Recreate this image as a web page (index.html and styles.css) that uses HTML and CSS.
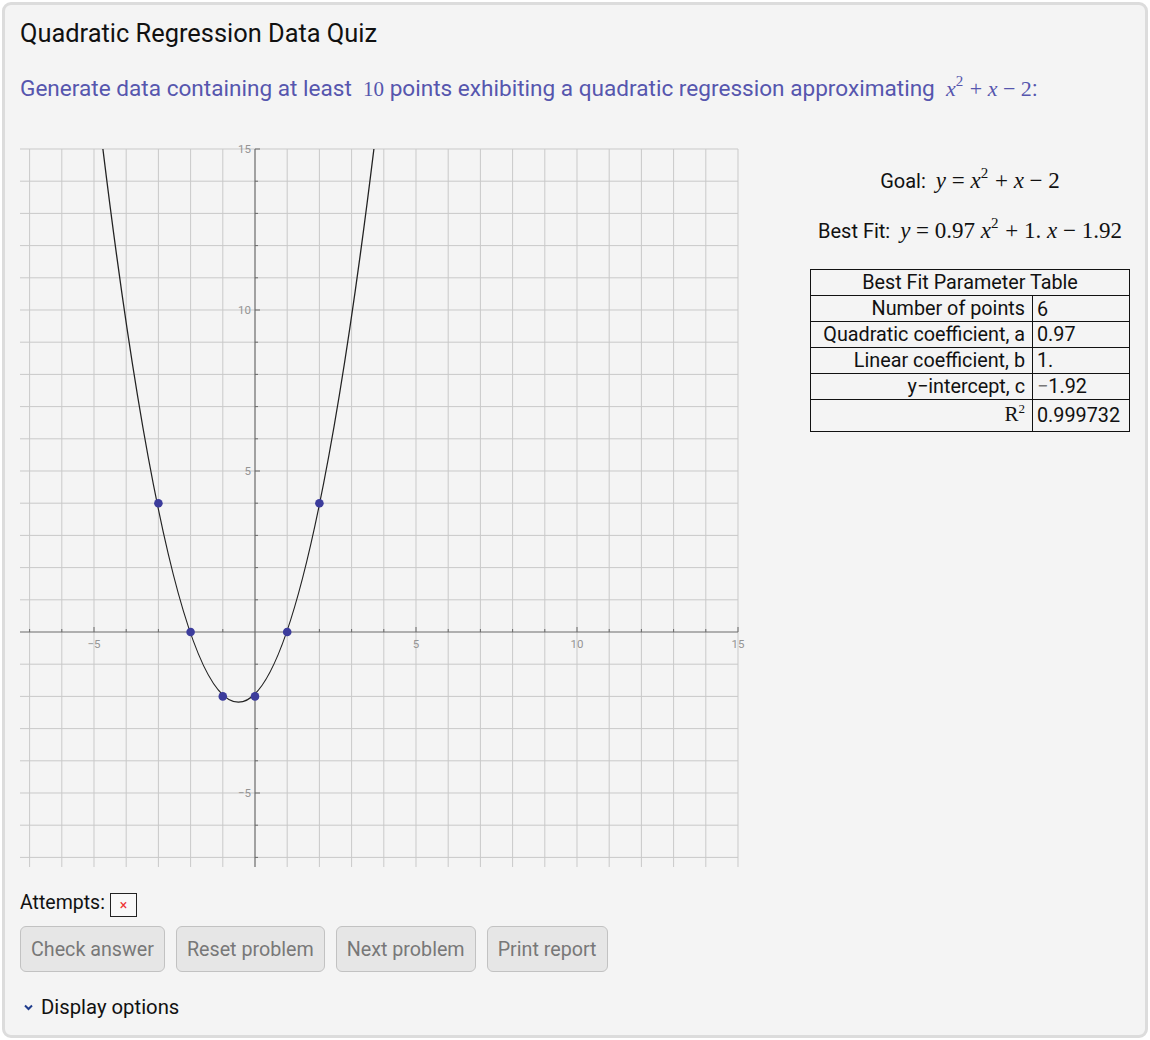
FILE: index.html
```html
<!DOCTYPE html>
<html>
<head>
<meta charset="utf-8">
<title>Quadratic Regression Data Quiz</title>
<link rel="stylesheet" href="styles.css">
</head>
<body>
<div class="panel">
  <h1 class="title">Quadratic Regression Data Quiz</h1>
  <p class="question">Generate data containing at least&nbsp; <span class="num">10</span> points exhibiting a quadratic regression approximating&nbsp; <span class="math"><i>x</i><sup>2</sup> + <i>x</i> − 2</span>:</p>

  <div class="work">
    <svg class="plot" width="730" height="735" viewBox="20 135 730 735" xmlns="http://www.w3.org/2000/svg">
      <path class="grid" d="M29.6 147V865M61.8 147V865M94 147V865M126.2 147V865M158.4 147V865M190.6 147V865M222.8 147V865M287.2 147V865M319.4 147V865M351.6 147V865M383.8 147V865M416 147V865M448.2 147V865M480.4 147V865M512.6 147V865M544.8 147V865M577 147V865M609.2 147V865M641.4 147V865M673.6 147V865M705.8 147V865M738 147V865M20 147H738M20 179.2H738M20 211.4H738M20 243.6H738M20 275.8H738M20 308H738M20 340.2H738M20 372.4H738M20 404.6H738M20 436.8H738M20 469H738M20 501.2H738M20 533.4H738M20 565.6H738M20 597.8H738M20 662.2H738M20 694.4H738M20 726.6H738M20 758.8H738M20 791H738M20 823.2H738M20 855.4H738"/>
      <path class="axis" d="M20 630H738M255 147V865"/>
      <path class="ticks" d="M255 147h5M255 179.2h3M255 211.4h3M255 243.6h3M255 275.8h3M255 308h5M255 340.2h3M255 372.4h3M255 404.6h3M255 436.8h3M255 469h5M255 501.2h3M255 533.4h3M255 565.6h3M255 597.8h3M255 662.2h3M255 694.4h3M255 726.6h3M255 758.8h3M255 791h5M255 823.2h3M255 855.4h3M29.6 630v-3M61.8 630v-3M94 630v-5M126.2 630v-3M158.4 630v-3M190.6 630v-3M222.8 630v-3M287.2 630v-3M319.4 630v-3M351.6 630v-3M383.8 630v-3M416 630v-5M448.2 630v-3M480.4 630v-3M512.6 630v-3M544.8 630v-3M577 630v-5M609.2 630v-3M641.4 630v-3M673.6 630v-3M705.8 630v-3M738 630v-5"/>
      <g class="lbl">
        <text x="251" y="151" text-anchor="end">15</text>
        <text x="251" y="312" text-anchor="end">10</text>
        <text x="251" y="473" text-anchor="end">5</text>
        <text x="251" y="795" text-anchor="end">−5</text>
        <text x="94" y="646" text-anchor="middle">−5</text>
        <text x="416" y="646" text-anchor="middle">5</text>
        <text x="577" y="646" text-anchor="middle">10</text>
        <text x="738" y="646" text-anchor="middle">15</text>
      </g>
      <path class="curve" d="M102.9 147Q238.4 1253.4 373.9 147"/>
      <g class="pts">
        <circle cx="158.4" cy="501.2" r="4.3"/>
        <circle cx="190.6" cy="630" r="4.3"/>
        <circle cx="222.8" cy="694.4" r="4.3"/>
        <circle cx="255" cy="694.4" r="4.3"/>
        <circle cx="287.2" cy="630" r="4.3"/>
        <circle cx="319.4" cy="501.2" r="4.3"/>
      </g>
    </svg>

    <div class="side">
      <div class="eq"><span class="lab">Goal:</span>&nbsp; <span class="m"><i>y</i> = <i>x</i><sup>2</sup> + <i>x</i> − 2</span></div>
      <div class="eq eq2"><span class="lab">Best Fit:</span>&nbsp; <span class="m"><i>y</i> = 0.97 <i>x</i><sup>2</sup> + 1. <i>x</i> − 1.92</span></div>
      <table class="params">
        <tr><th colspan="2">Best Fit Parameter Table</th></tr>
        <tr><td class="k">Number of points</td><td class="v v1">6</td></tr>
        <tr><td class="k">Quadratic coefficient, a</td><td class="v">0.97</td></tr>
        <tr><td class="k">Linear coefficient, b</td><td class="v">1.</td></tr>
        <tr><td class="k">y−intercept, c</td><td class="v"><span class="minus">−</span>1.92</td></tr>
        <tr class="last"><td class="k"><span class="rr">R<sup>2</sup></span></td><td class="v">0.999732</td></tr>
      </table>
    </div>
  </div>

  <div class="attempts"><span class="att-lab">Attempts:</span><span class="att-box">×</span></div>

  <div class="buttons">
    <button class="btn">Check answer</button>
    <button class="btn">Reset problem</button>
    <button class="btn">Next problem</button>
    <button class="btn">Print report</button>
  </div>

  <div class="options">
    <svg class="chev" width="9" height="7" viewBox="0 0 9 7"><path d="M1 1.5L4.5 5L8 1.5" fill="none" stroke="#1f3c8c" stroke-width="2"/></svg>
    <span>Display options</span>
  </div>
</div>
</body>
</html>
```

FILE: styles.css
```css
html, body {
  margin: 0;
  padding: 0;
  background: #ffffff;
}
body {
  font-family: Roboto, "Liberation Sans", Arial, sans-serif;
  color: #111;
}
.panel {
  box-sizing: border-box;
  margin: 2px;
  width: 1146px;
  height: 1036px;
  border: 3px solid #dcdcdc;
  border-radius: 9px;
  background: #f4f4f4;
  padding: 13px 15px 0 15px;
}
.title {
  margin: 0;
  font-weight: 400;
  font-size: 25.4px;
  line-height: 30px;
  color: #111;
}
.question {
  margin: 26px 0 0 0;
  font-size: 22.6px;
  line-height: 30px;
  color: #5656ae;
  white-space: nowrap;
}
.question .num {
  font-family: "Liberation Serif", "Times New Roman", serif;
  font-size: 21px;
}
.math {
  font-family: "Liberation Serif", "Times New Roman", serif;
  font-size: 22px;
}
.math sup, .m sup {
  font-size: 15px;
  font-style: normal;
  vertical-align: 0;
  position: relative;
  top: -10px;
  margin-left: 0;
  margin-right: 1px;
}
.work {
  display: flex;
  margin-top: 31px;
}
.plot {
  display: block;
  flex: none;
}
.grid {
  fill: none;
  stroke: #c9c9c9;
  stroke-width: 1;
}
.axis {
  fill: none;
  stroke: #6a6a6a;
  stroke-width: 1.2;
}
.ticks {
  fill: none;
  stroke: #6a6a6a;
  stroke-width: 1;
}
.lbl text {
  font-family: Roboto, "Liberation Sans", sans-serif;
  font-size: 11.5px;
  fill: #949494;
}
.curve {
  fill: none;
  stroke: #222;
  stroke-width: 1.3;
}
.pts circle {
  fill: #3c3c9c;
}
.side {
  flex: none;
  width: 340px;
  margin-left: 50px;
  display: flex;
  flex-direction: column;
  align-items: center;
  padding-top: 28px;
}
.eq {
  font-size: 20px;
  line-height: 32px;
  height: 32px;
  white-space: nowrap;
  color: #111;
}
.eq2 {
  margin-top: 18px;
}
.m {
  font-family: "Liberation Serif", "Times New Roman", serif;
  font-size: 23px;
}
.params {
  margin-top: 22px;
  border-collapse: collapse;
  width: 320px;
  font-size: 19.8px;
  color: #111;
}
.params th, .params td {
  border: 1px solid #111;
  height: 25px;
  padding: 0;
  line-height: 22px;
  font-weight: 400;
  white-space: nowrap;
}
.params th {
  text-align: center;
}
.params .k {
  width: 222px;
  text-align: right;
  padding-right: 7px;
  box-sizing: border-box;
}
.params .v {
  text-align: left;
  padding-left: 4px;
}
.params .v1 {
  vertical-align: bottom;
}
.params .last td {
  height: 31px;
}
.minus {
  color: #777;
}
.rr {
  font-family: "Liberation Serif", "Times New Roman", serif;
  font-size: 21px;
}
.rr sup {
  font-size: 13px;
  vertical-align: 0;
  position: relative;
  top: -8px;
}
.attempts {
  display: flex;
  align-items: center;
  margin-top: 18px;
  height: 28px;
  font-size: 19.5px;
}
.att-lab {
  position: relative;
  top: -2px;
}
.att-box {
  margin-left: 5px;
  width: 25px;
  height: 22px;
  border: 1px solid #222;
  color: #e33;
  font-size: 14px;
  line-height: 22px;
  text-align: center;
  position: relative;
  top: 1px;
  background: #f8f8f8;
}
.buttons {
  display: flex;
  gap: 11px;
  margin-top: 8px;
}
.btn {
  height: 46px;
  padding: 0 10px;
  font-family: Roboto, "Liberation Sans", sans-serif;
  font-size: 19.7px;
  color: #787878;
  background: #e6e6e6;
  border: 1px solid #c2c2c2;
  border-radius: 6px;
}
.options {
  display: flex;
  align-items: center;
  margin-top: 23px;
  margin-left: 4px;
  font-size: 20.3px;
  line-height: 24px;
  color: #111;
}
.chev {
  display: block;
  margin-right: 8px;
}
```
